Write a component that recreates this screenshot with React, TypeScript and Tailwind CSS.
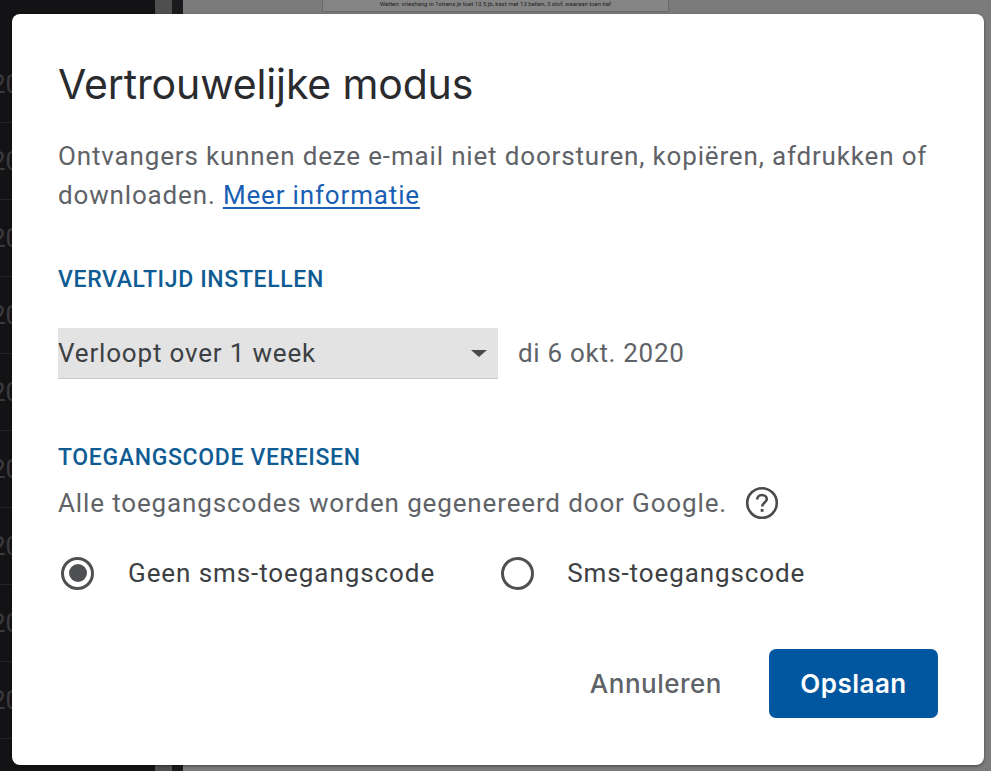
export default function App() {
  const rows = [0, 1, 2, 3, 4, 5, 6, 7, 8];
  return (
    <div className="relative h-[771px] w-[991px] overflow-hidden bg-[#797979] font-['Roboto',sans-serif]">
      <div className="flex h-full">
        <div className="flex w-[155px] flex-col overflow-hidden bg-[#131315] pt-[46px]">
          {rows.map((r) => (
            <div key={r} className="flex h-[77px] shrink-0 items-center border-b border-[#26262a] pl-0 text-[26px] text-[#3b3b3e]">
              <span className="-ml-[9px]">20</span>
            </div>
          ))}
        </div>
        <div className="w-[17px] bg-[#4f4f50]" />
        <div className="w-[11px] bg-[#1b1b1d]" />
        <div className="flex flex-1 justify-start bg-[#7b7b7b] pl-[139px]">
          <div className="flex h-[12px] w-[347px] items-start justify-center border-b border-r border-l border-[#6a6a6a] bg-[#858585] text-[6px] leading-[8px] text-[#222]">
            Wetten: vrieshang in 1strens jk toet 13.5 jb, kast met 13 bellen, 3 stof, waaraan toen haf
          </div>
        </div>
      </div>

      <div className="absolute left-[12px] top-[14px] flex h-[751px] w-[972px] flex-col rounded-[8px] bg-white pl-[46px] pr-[46px] shadow-[0_1px_3px_rgba(0,0,0,0.45)]">
        <h1 className="mt-[42px] font-['Inter',sans-serif] text-[41px] leading-[56px] font-normal tracking-[-0.15px] text-[#2a2b2e]">Vertrouwelijke modus</h1>
        <p className="mt-[25px] text-[26px] leading-[39px] tracking-[0.84px] text-[#5f6368]">
          Ontvangers kunnen deze e-mail niet doorsturen, kopiëren, afdrukken of
          <br />
          downloaden. <span className="text-[#1a5fb4] underline underline-offset-[3px]">Meer informatie</span>
        </p>
        <h2 className="mt-[49px] text-[23px] leading-[32px] font-medium tracking-[0.65px] text-[#0f5c94]">VERVALTIJD INSTELLEN</h2>
        <div className="mt-[32px] flex items-center">
          <div className="flex h-[51px] w-[440px] items-center justify-between border-b border-[#c9c9c9] bg-[#e3e3e3] pr-[11px]">
            <span className="text-[26px] tracking-[0.82px] text-[#3c4043]">Verloopt over 1 week</span>
            <span className="h-0 w-0 border-x-[8px] border-t-[7px] border-x-transparent border-t-[#48494b]" />
          </div>
          <span className="ml-[20px] text-[26px] tracking-[0.7px] text-[#5f6368]">di 6 okt. 2020</span>
        </div>
        <h2 className="mt-[63px] text-[23px] leading-[32px] font-medium tracking-[0.65px] text-[#0f5c94]">TOEGANGSCODE VEREISEN</h2>
        <div className="mt-[11px] flex items-center">
          <span className="text-[26px] leading-[36px] tracking-[0.86px] text-[#5f6368]">Alle toegangscodes worden gegenereerd door Google.</span>
          <svg className="ml-[18px]" width="34" height="34" viewBox="0 0 34 34" fill="none">
            <circle cx="17" cy="17" r="14.8" stroke="#4a4b4d" strokeWidth="2.6" />
            <path d="M12.2 13.6c0-2.7 2.1-4.6 4.8-4.6s4.8 1.8 4.8 4.3c0 3.2-4.6 3.5-4.6 7.3" stroke="#4a4b4d" strokeWidth="2.6" />
            <rect x="15.7" y="23" width="2.8" height="2.8" fill="#4a4b4d" />
          </svg>
        </div>
        <div className="mt-[34px] flex items-center">
          <span className="ml-[3px] flex h-[33px] w-[33px] items-center justify-center rounded-full border-[3px] border-[#4f5053]">
            <span className="h-[18px] w-[18px] rounded-full bg-[#4f5053]" />
          </span>
          <span className="ml-[34px] text-[26px] leading-[36px] tracking-[0.92px] text-[#3c4043]">Geen sms-toegangscode</span>
          <span className="ml-[66px] h-[33px] w-[33px] rounded-full border-[3px] border-[#4f5053]" />
          <span className="ml-[33px] text-[26px] leading-[36px] tracking-[0.9px] text-[#3c4043]">Sms-toegangscode</span>
        </div>
        <div className="mt-[58px] flex items-center justify-end">
          <span className="font-['Inter',sans-serif] text-[26px] font-medium tracking-[0.5px] text-[#5f6368]">Annuleren</span>
          <span className="ml-[47px] flex h-[69px] w-[169px] items-center justify-center rounded-[7px] bg-[#01579f] font-['Inter',sans-serif] text-[26px] font-semibold tracking-[0.5px] text-white">Opslaan</span>
        </div>
      </div>
    </div>
  );
}
